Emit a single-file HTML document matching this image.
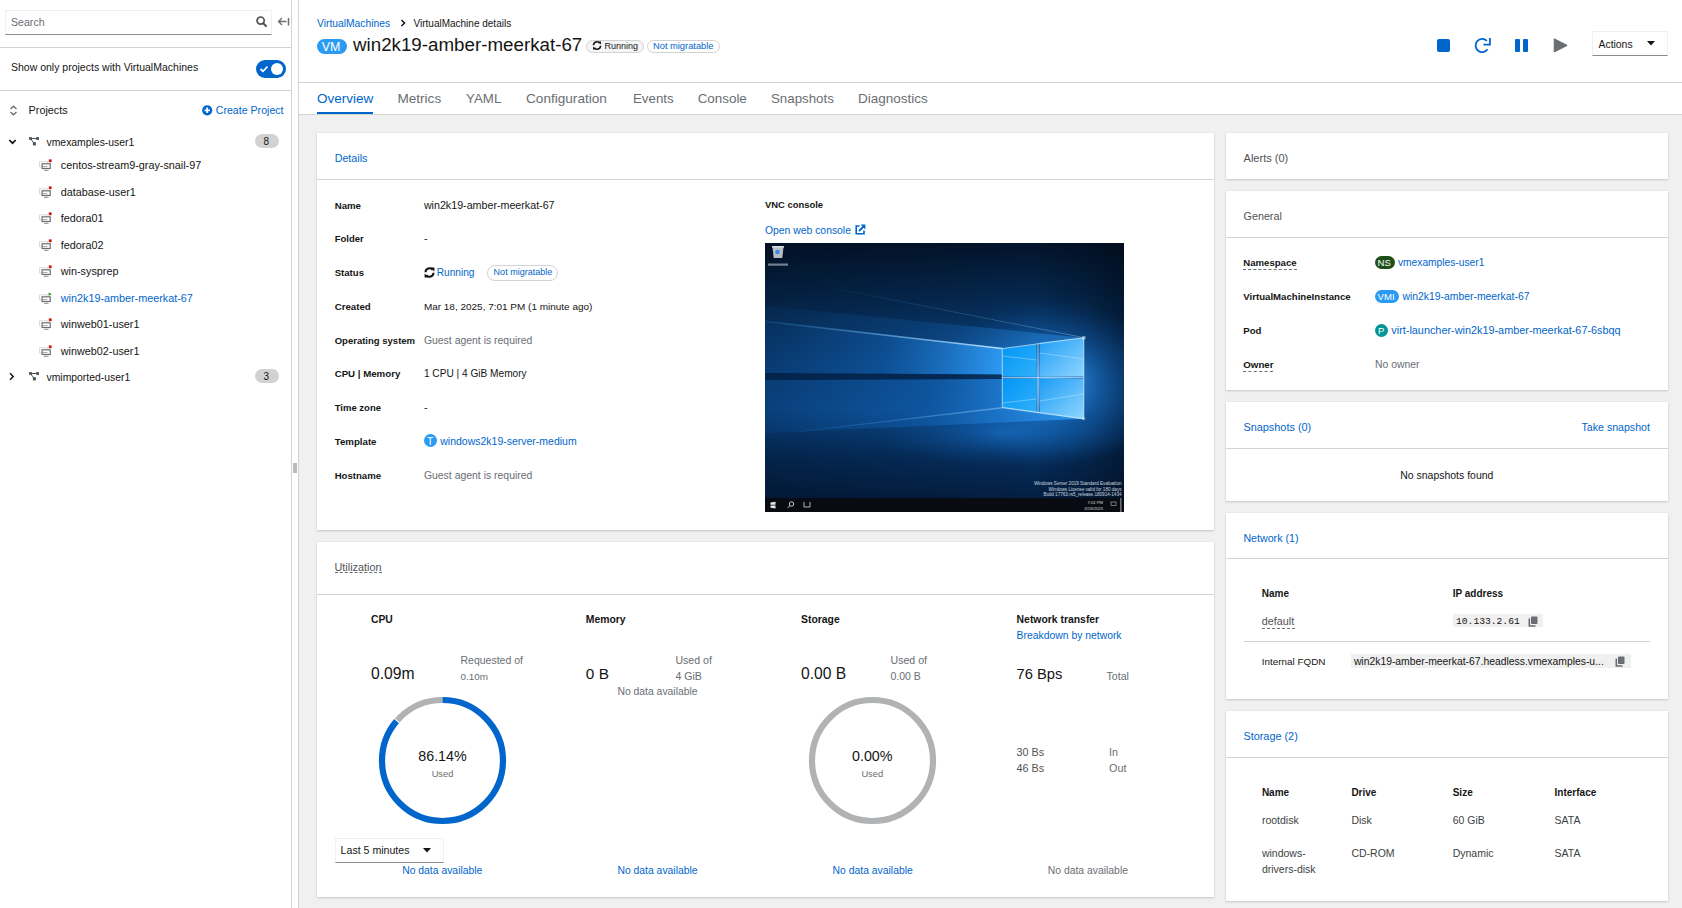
<!DOCTYPE html>
<html><head><meta charset="utf-8">
<style>
*{box-sizing:border-box;margin:0;padding:0}
html,body{width:1682px;height:908px;overflow:hidden}
body{background:#f0f0f0;font-family:"Liberation Sans",sans-serif;color:#151515;position:relative;font-size:11px}
.a{position:absolute}
.t{position:absolute;white-space:nowrap;line-height:1}
.lk{color:#0066cc}
.mu{color:#6a6e73}
.card{position:absolute;background:#fff;box-shadow:0 1px 2px rgba(3,3,3,.16),0 0 1px rgba(3,3,3,.1)}
.hl{position:absolute;height:1px;background:#d2d2d2}
</style></head>
<body>
<div class="a" style="left:0;top:0;width:292px;height:908px;background:#fff;border-right:1px solid #d2d2d2"></div>
<div class="a" style="left:292px;top:0;width:7px;height:908px;background:#fff;border-right:1px solid #d2d2d2"></div>
<div class="a" style="left:293px;top:463px;width:4px;height:10px;background:#b8bbbe"></div>
<div class="a" style="left:299px;top:0;width:1383px;height:83px;background:#fff;border-bottom:1px solid #d2d2d2"></div>
<div class="a" style="left:299px;top:83px;width:1383px;height:32px;background:#fff;border-bottom:1px solid #d2d2d2"></div>
<div class="card" style="left:317px;top:133px;width:897px;height:397px"></div>
<div class="card" style="left:317px;top:542px;width:897px;height:355px"></div>
<div class="card" style="left:1226px;top:133px;width:442px;height:46px"></div>
<div class="card" style="left:1226px;top:191px;width:442px;height:199px"></div>
<div class="card" style="left:1226px;top:402px;width:442px;height:99px"></div>
<div class="card" style="left:1226px;top:513px;width:442px;height:186px"></div>
<div class="card" style="left:1226px;top:711px;width:442px;height:190px"></div>
<div class="a" style="left:5px;top:10px;width:267px;height:25px;border:1px solid #f0f0f0;border-bottom:1px solid #8a8d90"></div>
<div class="t mu" style="left:11px;top:17.10px;font-size:10.6px;">Search</div>
<svg class="a" style="left:256px;top:16px" width="11" height="11" viewBox="0 0 11 11"><circle cx="4.6" cy="4.6" r="3.6" fill="none" stroke="#4f5255" stroke-width="1.7"/><path d="M7.2 7.2L10 10" stroke="#4f5255" stroke-width="2" stroke-linecap="round"/></svg>
<svg class="a" style="left:277px;top:17px" width="13" height="9" viewBox="0 0 13 9"><path d="M5 1L1.5 4.5L5 8M1.5 4.5H9.5" fill="none" stroke="#6a6e73" stroke-width="1.3"/><path d="M11.5 1V8.5" stroke="#6a6e73" stroke-width="1.5"/></svg>
<div class="hl" style="left:0;top:47px;width:292px"></div>
<div class="t" style="left:11px;top:61.90px;font-size:10.5px;">Show only projects with VirtualMachines</div>
<div class="a" style="left:256px;top:60px;width:30px;height:18px;border-radius:9px;background:#0066cc"></div>
<div class="a" style="left:271px;top:63px;width:12px;height:12px;border-radius:50%;background:#fff"></div>
<svg class="a" style="left:259px;top:65px" width="10" height="8" viewBox="0 0 10 8"><path d="M1.5 4L4 6.3L8.5 1.5" fill="none" stroke="#fff" stroke-width="1.7"/></svg>
<div class="hl" style="left:0;top:90px;width:292px"></div>
<svg class="a" style="left:9px;top:105px" width="9" height="11" viewBox="0 0 9 11"><path d="M1.5 4L4.5 1.2L7.5 4M1.5 7L4.5 9.8L7.5 7" fill="none" stroke="#6a6e73" stroke-width="1.4"/></svg>
<div class="t" style="left:28.6px;top:104.90px;font-size:10.8px;">Projects</div>
<svg class="a" style="left:202px;top:105px" width="11" height="11" viewBox="0 0 11 11"><circle cx="5.2" cy="5.3" r="5.1" fill="#0066cc"/><path d="M5.2 2.6V8M2.5 5.3H7.9" stroke="#fff" stroke-width="1.8"/></svg>
<div class="t lk" style="left:215.8px;top:104.90px;font-size:10.6px;">Create Project</div>
<svg class="a" style="left:8px;top:138px" width="9" height="8" viewBox="0 0 9 8"><path d="M1.3 2L4.5 5.2L7.7 2" fill="none" stroke="#151515" stroke-width="1.7"/></svg>
<svg class="a" style="left:28px;top:136px" width="12" height="11" viewBox="0 0 12 11"><path d="M2.4 2.5H9.5M2.4 2.5L6.4 7.8" stroke="#4f5255" stroke-width="1"/><rect x="1.1" y="1.1" width="2.8" height="2.8" fill="#4f5255"/><rect x="8.2" y="1.1" width="2.8" height="2.8" fill="#4f5255"/><rect x="4.9" y="6.2" width="3" height="3.2" fill="#4f5255"/></svg>
<div class="t" style="left:46.5px;top:138.00px;font-size:10.4px;">vmexamples-user1</div>
<div class="a" style="left:255px;top:134px;width:24px;height:14px;border-radius:7px;background:#d2d2d2"></div>
<div class="t" style="left:263.5px;top:137.00px;font-size:10px;color:#151515">8</div>
<svg class="a" style="left:39px;top:158.7px" width="14" height="13" viewBox="0 0 14 13"><rect x="0.6" y="2.8" width="8.2" height="5" fill="none" stroke="#d2d2d2" stroke-width="0.8"/><rect x="3.1" y="4.8" width="8.1" height="4.7" fill="#fff" stroke="#6a6e73" stroke-width="1.2"/><path d="M3.5 7.6H8.5" stroke="#6a6e73" stroke-width="0.6"/><path d="M5 11.3H9.5" stroke="#8a8d90" stroke-width="1"/><rect x="9.8" y="0.4" width="2.8" height="2.8" fill="#c9190b"/></svg>
<div class="t" style="left:60.8px;top:160.20px;font-size:10.8px;">centos-stream9-gray-snail-97</div>
<svg class="a" style="left:39px;top:185.7px" width="14" height="13" viewBox="0 0 14 13"><rect x="0.6" y="2.8" width="8.2" height="5" fill="none" stroke="#d2d2d2" stroke-width="0.8"/><rect x="3.1" y="4.8" width="8.1" height="4.7" fill="#fff" stroke="#6a6e73" stroke-width="1.2"/><path d="M3.5 7.6H8.5" stroke="#6a6e73" stroke-width="0.6"/><path d="M5 11.3H9.5" stroke="#8a8d90" stroke-width="1"/><rect x="9.8" y="0.4" width="2.8" height="2.8" fill="#c9190b"/></svg>
<div class="t" style="left:60.8px;top:187.20px;font-size:10.8px;">database-user1</div>
<svg class="a" style="left:39px;top:211.8px" width="14" height="13" viewBox="0 0 14 13"><rect x="0.6" y="2.8" width="8.2" height="5" fill="none" stroke="#d2d2d2" stroke-width="0.8"/><rect x="3.1" y="4.8" width="8.1" height="4.7" fill="#fff" stroke="#6a6e73" stroke-width="1.2"/><path d="M3.5 7.6H8.5" stroke="#6a6e73" stroke-width="0.6"/><path d="M5 11.3H9.5" stroke="#8a8d90" stroke-width="1"/><rect x="9.8" y="0.4" width="2.8" height="2.8" fill="#c9190b"/></svg>
<div class="t" style="left:60.8px;top:213.30px;font-size:10.8px;">fedora01</div>
<svg class="a" style="left:39px;top:238.5px" width="14" height="13" viewBox="0 0 14 13"><rect x="0.6" y="2.8" width="8.2" height="5" fill="none" stroke="#d2d2d2" stroke-width="0.8"/><rect x="3.1" y="4.8" width="8.1" height="4.7" fill="#fff" stroke="#6a6e73" stroke-width="1.2"/><path d="M3.5 7.6H8.5" stroke="#6a6e73" stroke-width="0.6"/><path d="M5 11.3H9.5" stroke="#8a8d90" stroke-width="1"/><rect x="9.8" y="0.4" width="2.8" height="2.8" fill="#c9190b"/></svg>
<div class="t" style="left:60.8px;top:240.00px;font-size:10.8px;">fedora02</div>
<svg class="a" style="left:39px;top:264.7px" width="14" height="13" viewBox="0 0 14 13"><rect x="0.6" y="2.8" width="8.2" height="5" fill="none" stroke="#d2d2d2" stroke-width="0.8"/><rect x="3.1" y="4.8" width="8.1" height="4.7" fill="#fff" stroke="#6a6e73" stroke-width="1.2"/><path d="M3.5 7.6H8.5" stroke="#6a6e73" stroke-width="0.6"/><path d="M5 11.3H9.5" stroke="#8a8d90" stroke-width="1"/><rect x="9.8" y="0.4" width="2.8" height="2.8" fill="#c9190b"/></svg>
<div class="t" style="left:60.8px;top:266.20px;font-size:10.8px;">win-sysprep</div>
<svg class="a" style="left:39px;top:291.6px" width="14" height="13" viewBox="0 0 14 13"><rect x="0.6" y="2.8" width="8.2" height="5" fill="none" stroke="#d2d2d2" stroke-width="0.8"/><rect x="3.1" y="4.8" width="8.1" height="4.7" fill="#fff" stroke="#6a6e73" stroke-width="1.2"/><path d="M3.5 7.6H8.5" stroke="#6a6e73" stroke-width="0.6"/><path d="M5 11.3H9.5" stroke="#8a8d90" stroke-width="1"/><path d="M9.6 0.6L12.8 2.2L9.6 3.8Z" fill="#3e8635"/></svg>
<div class="t lk" style="left:60.8px;top:293.10px;font-size:10.8px;">win2k19-amber-meerkat-67</div>
<svg class="a" style="left:39px;top:317.8px" width="14" height="13" viewBox="0 0 14 13"><rect x="0.6" y="2.8" width="8.2" height="5" fill="none" stroke="#d2d2d2" stroke-width="0.8"/><rect x="3.1" y="4.8" width="8.1" height="4.7" fill="#fff" stroke="#6a6e73" stroke-width="1.2"/><path d="M3.5 7.6H8.5" stroke="#6a6e73" stroke-width="0.6"/><path d="M5 11.3H9.5" stroke="#8a8d90" stroke-width="1"/><rect x="9.8" y="0.4" width="2.8" height="2.8" fill="#c9190b"/></svg>
<div class="t" style="left:60.8px;top:319.30px;font-size:10.8px;">winweb01-user1</div>
<svg class="a" style="left:39px;top:344.5px" width="14" height="13" viewBox="0 0 14 13"><rect x="0.6" y="2.8" width="8.2" height="5" fill="none" stroke="#d2d2d2" stroke-width="0.8"/><rect x="3.1" y="4.8" width="8.1" height="4.7" fill="#fff" stroke="#6a6e73" stroke-width="1.2"/><path d="M3.5 7.6H8.5" stroke="#6a6e73" stroke-width="0.6"/><path d="M5 11.3H9.5" stroke="#8a8d90" stroke-width="1"/><rect x="9.8" y="0.4" width="2.8" height="2.8" fill="#c9190b"/></svg>
<div class="t" style="left:60.8px;top:346.00px;font-size:10.8px;">winweb02-user1</div>
<svg class="a" style="left:8px;top:372px" width="8" height="9" viewBox="0 0 8 9"><path d="M2 1.3L5.2 4.5L2 7.7" fill="none" stroke="#151515" stroke-width="1.5"/></svg>
<svg class="a" style="left:28px;top:371px" width="12" height="11" viewBox="0 0 12 11"><path d="M2.4 2.5H9.5M2.4 2.5L6.4 7.8" stroke="#4f5255" stroke-width="1"/><rect x="1.1" y="1.1" width="2.8" height="2.8" fill="#4f5255"/><rect x="8.2" y="1.1" width="2.8" height="2.8" fill="#4f5255"/><rect x="4.9" y="6.2" width="3" height="3.2" fill="#4f5255"/></svg>
<div class="t" style="left:46.5px;top:372.90px;font-size:10.4px;">vmimported-user1</div>
<div class="a" style="left:255px;top:369px;width:24px;height:14px;border-radius:7px;background:#d2d2d2"></div>
<div class="t" style="left:263.5px;top:372.00px;font-size:10px;">3</div>
<div class="t lk" style="left:317px;top:18.50px;font-size:10.3px;">VirtualMachines</div>
<svg class="a" style="left:400px;top:18.9px" width="7" height="8" viewBox="0 0 7 8"><path d="M1.5 1L4.5 4L1.5 7" fill="none" stroke="#151515" stroke-width="1.5"/></svg>
<div class="t" style="left:413.5px;top:18.50px;font-size:10px;">VirtualMachine details</div>
<div class="a" style="left:317px;top:39px;width:30px;height:15px;border-radius:8px;background:#2b9af3"></div>
<div class="t" style="left:321.8px;top:40.60px;font-size:12.4px;color:#fff">VM</div>
<div class="t" style="left:353px;top:35.80px;font-size:18.75px;">win2k19-amber-meerkat-67</div>
<div class="a" style="left:586px;top:40px;width:58px;height:13px;border-radius:7px;background:#f5f5f5;border:1px solid #d2d2d2"></div>
<svg class="a" style="left:591.5px;top:41.2px" width="10" height="9" viewBox="0 0 10 9"><path d="M1.5 4.2A3.3 3.3 0 0 1 7.6 2.4M8.5 4.8A3.3 3.3 0 0 1 2.4 6.6" fill="none" stroke="#151515" stroke-width="1.5"/><path d="M6 0.5L9 0.5L9 3.5Z M4 8.5L1 8.5L1 5.5Z" fill="#151515"/></svg>
<div class="t" style="left:604.5px;top:41.60px;font-size:9px;">Running</div>
<div class="a" style="left:647px;top:40px;width:73px;height:13px;border-radius:7px;background:#fff;border:1px solid #d2d2d2"></div>
<div class="t lk" style="left:653px;top:41.60px;font-size:9.3px;">Not migratable</div>
<div class="a" style="left:1437px;top:38.6px;width:13.2px;height:13.4px;border-radius:2px;background:#0066cc"></div>
<svg class="a" style="left:1474px;top:37px" width="17" height="17" viewBox="0 0 17 17"><path d="M12.9 3.9A6.6 6.6 0 1 0 13.6 12.3" fill="none" stroke="#0066cc" stroke-width="1.8"/><path d="M9.4 7.6H15.9V0.9" fill="none" stroke="#0066cc" stroke-width="1.8"/></svg>
<div class="a" style="left:1515px;top:38.6px;width:4.5px;height:13.4px;border-radius:1px;background:#0066cc"></div>
<div class="a" style="left:1523.3px;top:38.6px;width:4.5px;height:13.4px;border-radius:1px;background:#0066cc"></div>
<svg class="a" style="left:1553px;top:37px" width="16" height="17" viewBox="0 0 16 17"><path d="M1.2 1.8L14.2 8.4L1.2 15Z" fill="#6a6e73" stroke="#6a6e73" stroke-width="1" stroke-linejoin="round"/></svg>
<div class="a" style="left:1592px;top:31px;width:76px;height:25px;border:1px solid #f0f0f0;border-bottom:1px solid #8a8d90"></div>
<svg class="a" style="left:1647px;top:41px" width="8" height="5" viewBox="0 0 8 5"><path d="M0 0H8L4 4.5Z" fill="#151515"/></svg>
<div class="a" style="left:317px;top:112px;width:56px;height:2px;background:#0066cc"></div>
<div class="t" style="left:1598.5px;top:39.50px;font-size:10.4px;">Actions</div>
<div class="t lk" style="left:317px;top:91.90px;font-size:13.5px;">Overview</div>
<div class="t mu" style="left:397.4px;top:91.90px;font-size:13.6px;">Metrics</div>
<div class="t mu" style="left:466.1px;top:91.90px;font-size:13.3px;">YAML</div>
<div class="t mu" style="left:526px;top:91.90px;font-size:13.6px;">Configuration</div>
<div class="t mu" style="left:633px;top:91.90px;font-size:13.3px;">Events</div>
<div class="t mu" style="left:697.7px;top:91.90px;font-size:13.4px;">Console</div>
<div class="t mu" style="left:771px;top:91.90px;font-size:13.3px;">Snapshots</div>
<div class="t mu" style="left:858px;top:91.90px;font-size:13.5px;">Diagnostics</div>
<div class="t lk" style="left:334.7px;top:153.00px;font-size:10.7px;">Details</div>
<div class="hl" style="left:317px;top:179px;width:897px"></div>
<div class="t" style="left:334.7px;top:201.00px;font-size:9.66px;font-weight:bold;">Name</div>
<div class="t" style="left:334.7px;top:234.10px;font-size:9.5px;font-weight:bold;">Folder</div>
<div class="t" style="left:334.7px;top:267.70px;font-size:9.6px;font-weight:bold;">Status</div>
<div class="t" style="left:334.7px;top:302.20px;font-size:9.7px;font-weight:bold;">Created</div>
<div class="t" style="left:334.7px;top:335.90px;font-size:9.52px;font-weight:bold;">Operating system</div>
<div class="t" style="left:334.7px;top:369.00px;font-size:9.69px;font-weight:bold;">CPU | Memory</div>
<div class="t" style="left:334.7px;top:402.90px;font-size:9.5px;font-weight:bold;">Time zone</div>
<div class="t" style="left:334.7px;top:436.80px;font-size:9.7px;font-weight:bold;">Template</div>
<div class="t" style="left:334.7px;top:470.70px;font-size:9.58px;font-weight:bold;">Hostname</div>
<div class="t" style="left:423.9px;top:200.00px;font-size:10.69px;">win2k19-amber-meerkat-67</div>
<div class="t" style="left:423.9px;top:233.10px;font-size:10.5px;">-</div>
<div class="t" style="left:423.9px;top:302.20px;font-size:9.98px;">Mar 18, 2025, 7:01 PM (1 minute ago)</div>
<div class="t mu" style="left:423.9px;top:335.90px;font-size:10.44px;">Guest agent is required</div>
<div class="t" style="left:423.9px;top:369.00px;font-size:10.15px;">1 CPU | 4 GiB Memory</div>
<div class="t" style="left:423.9px;top:401.90px;font-size:10.5px;">-</div>
<div class="t mu" style="left:423.9px;top:470.70px;font-size:10.44px;">Guest agent is required</div>
<svg class="a" style="left:423.5px;top:266.5px" width="11" height="11" viewBox="0 0 11 11"><path d="M1.5 5.3A4 4 0 0 1 8.7 2.9M9.5 5.7A4 4 0 0 1 2.3 8.1" fill="none" stroke="#151515" stroke-width="2"/><path d="M6.2 0.4L10.4 0.4L10.4 4.6Z M4.8 10.6L0.6 10.6L0.6 6.4Z" fill="#151515"/></svg>
<div class="t lk" style="left:436.7px;top:267.70px;font-size:10.15px;">Running</div>
<div class="a" style="left:487.3px;top:265.2px;width:71.2px;height:15.5px;border-radius:8px;border:1px solid #d2d2d2"></div>
<div class="t lk" style="left:493.6px;top:268.20px;font-size:9.04px;">Not migratable</div>
<div class="a" style="left:424px;top:434.3px;width:13px;height:13px;border-radius:50%;background:#2b9af3"></div>
<div class="t" style="left:427px;top:437.00px;font-size:10.4px;color:#fff">T</div>
<div class="t lk" style="left:440.3px;top:436.80px;font-size:10.49px;">windows2k19-server-medium</div>
<div class="t" style="left:765px;top:199.80px;font-size:9.44px;font-weight:bold;">VNC console</div>
<div class="t lk" style="left:765px;top:225.50px;font-size:10.38px;">Open web console</div>
<svg class="a" style="left:854.5px;top:223.5px" width="11" height="11" viewBox="0 0 11 11"><path d="M4.5 2H1.2V9.8H9V6.5" fill="none" stroke="#0066cc" stroke-width="1.6"/><path d="M5.5 0.6H10.4V5.5Z" fill="#0066cc"/><path d="M4 7L9 2" stroke="#0066cc" stroke-width="1.8"/></svg>
<svg class="a" style="left:765px;top:243px" width="359" height="269" viewBox="0 0 359 269">
<defs>
<linearGradient id="vb" x1="0" y1="0" x2="0" y2="1">
<stop offset="0" stop-color="#03132a"/>
<stop offset="0.2" stop-color="#05284f"/>
<stop offset="0.45" stop-color="#0a4584"/>
<stop offset="0.62" stop-color="#0b4f96"/>
<stop offset="0.8" stop-color="#052d5c"/>
<stop offset="1" stop-color="#031a38"/>
</linearGradient>
<linearGradient id="hl" x1="0" y1="0" x2="1" y2="0">
<stop offset="0" stop-color="#000610" stop-opacity="0.25"/>
<stop offset="0.5" stop-color="#000610" stop-opacity="0.08"/>
<stop offset="0.75" stop-color="#000610" stop-opacity="0"/>
<stop offset="0.9" stop-color="#000610" stop-opacity="0.25"/>
<stop offset="1" stop-color="#000610" stop-opacity="0.5"/>
</linearGradient>
<linearGradient id="bm" x1="0" y1="0" x2="1" y2="0">
<stop offset="0" stop-color="#0d4f96" stop-opacity="0.2"/>
<stop offset="0.5" stop-color="#1262b5" stop-opacity="0.5"/>
<stop offset="1" stop-color="#2e9cf5" stop-opacity="0.95"/>
</linearGradient>
<linearGradient id="ln" x1="0" y1="0" x2="1" y2="0">
<stop offset="0" stop-color="#3a9cf0" stop-opacity="0.15"/>
<stop offset="1" stop-color="#bfe6ff" stop-opacity="0.95"/>
</linearGradient>
<linearGradient id="pl" x1="0" y1="0" x2="1" y2="1">
<stop offset="0" stop-color="#0296f5"/>
<stop offset="1" stop-color="#30b0fb"/>
</linearGradient>
<linearGradient id="pr" x1="0" y1="0" x2="1" y2="1">
<stop offset="0" stop-color="#1d9cf5"/>
<stop offset="1" stop-color="#8fd6ff"/>
</linearGradient>
<radialGradient id="gl" cx="0.5" cy="0.5" r="0.5">
<stop offset="0" stop-color="#5ab8ff" stop-opacity="0.85"/>
<stop offset="0.45" stop-color="#1f7fdc" stop-opacity="0.45"/>
<stop offset="1" stop-color="#0a4a8e" stop-opacity="0"/>
</radialGradient>
<radialGradient id="fl" cx="0.5" cy="0.5" r="0.5">
<stop offset="0" stop-color="#1d78d2" stop-opacity="0.55"/>
<stop offset="1" stop-color="#0a4a8e" stop-opacity="0"/>
</radialGradient>
</defs>
<rect width="359" height="269" fill="url(#vb)"/>
<rect width="359" height="255" fill="url(#hl)"/>
<ellipse cx="285" cy="140" rx="115" ry="85" fill="url(#gl)"/>
<ellipse cx="240" cy="190" rx="130" ry="35" fill="url(#fl)"/>
<polygon points="0,62.7 318.8,94.7 237.3,105.6 0,78.4" fill="url(#bm)" opacity="0.5"/>
<polygon points="0,78.4 237.3,105.6 237.3,131.5 0,130" fill="url(#bm)"/>
<polygon points="0,137 237.3,136 237.3,164.4 318.8,175.7 0,190" fill="url(#bm)"/>
<polygon points="0,77.6 237.3,104.8 237.3,106.2 0,79.2" fill="url(#ln)"/>
<polygon points="71,45.2 318.8,94.2 318.8,95 71,46" fill="url(#ln)" opacity="0.45"/>
<polygon points="35,188 237.3,164 318.8,175.5 318.8,176.5 237.3,165.5 35,189" fill="url(#ln)" opacity="0.7"/>
<polygon points="0,130 237.3,131.5 237.3,136 0,137" fill="#021835" fill-opacity="0.6"/>
<polygon points="237.3,105.6 271.5,101.5 271.5,133.6 237.3,133.6" fill="url(#pl)"/>
<polygon points="274.7,99.5 318.8,94.7 318.8,133.6 274.7,133.6" fill="url(#pr)"/>
<polygon points="237.3,135.8 271.5,135.8 271.5,169 237.3,164.4" fill="url(#pl)"/>
<polygon points="274.7,135.8 318.8,135.8 318.8,175.7 274.7,169.5" fill="url(#pr)"/>
<path d="M237.3 105.6L318.8 94.7V175.7L237.3 164.4Z M273 100.5V170 M237.3 134.7H318.8" fill="none" stroke="#d8f2ff" stroke-width="0.8" stroke-opacity="0.9"/>
<path d="M274.7 110L318.8 116 M237.3 113L271.5 117 M274.7 158L318.8 151 M237.3 160L271.5 156" stroke="#c8ecff" stroke-width="0.7" stroke-opacity="0.6"/>
<circle cx="318.8" cy="94.7" r="2" fill="#e8f6ff" opacity="0.5"/>
<circle cx="318.8" cy="175.7" r="1.6" fill="#e8f6ff" opacity="0.4"/>
<rect x="0" y="255" width="359" height="14" fill="#080c12"/>
<rect x="356" y="0" width="3" height="269" fill="#fff" opacity="0"/>
<path d="M5.5 259.5L10.5 258.8V261.8H5.5Z M5.5 262.5H10.5V265.5L5.5 264.8Z" fill="#e8e8e8"/>
<circle cx="26.5" cy="261" r="2.2" fill="none" stroke="#ddd" stroke-width="0.9"/>
<path d="M25 262.6L22.8 264.8" stroke="#ddd" stroke-width="1"/>
<path d="M39 259V264H45V259" fill="none" stroke="#ddd" stroke-width="0.8"/>
<path d="M7.5 4H18.5L17.3 15H8.7Z" fill="#b8bdc2"/><rect x="7" y="3" width="12" height="1.6" fill="#d8dcdf"/>
<circle cx="12.5" cy="9" r="2.3" fill="#2f8ee6"/>
<rect x="3" y="20.5" width="20" height="2.2" fill="#cfd8e2" opacity="0.55"/>
<g fill="#e6eef6" font-family="Liberation Sans" font-size="4.6" text-anchor="end" opacity="0.85">
<text x="356.5" y="242">Windows Server 2019 Standard Evaluation</text>
<text x="356.5" y="247.5">Windows License valid for 180 days</text>
<text x="356.5" y="253">Build 17763.rs5_release.180914-1434</text>
<text x="338" y="261" font-size="4.2">7:01 PM</text>
<text x="338" y="267" font-size="4.2">3/18/2025</text>
<rect x="346" y="259" width="5" height="3.5" fill="none" stroke="#ddd" stroke-width="0.6"/>
<rect x="355.5" y="255" width="0.8" height="14"/>
</g>
</svg>
<div class="t" style="left:334.5px;top:561.60px;font-size:10.84px;color:#4f5255">Utilization</div>
<div class="a" style="left:334.5px;top:572px;width:47px;height:0;border-top:1px dashed #6a6e73"></div>
<div class="hl" style="left:317px;top:594px;width:897px"></div>
<div class="t" style="left:371px;top:615.00px;font-size:10.32px;font-weight:bold;">CPU</div>
<div class="t" style="left:585.8px;top:615.00px;font-size:10.4px;font-weight:bold;">Memory</div>
<div class="t" style="left:801px;top:615.00px;font-size:10.4px;font-weight:bold;">Storage</div>
<div class="t" style="left:1016.6px;top:615.00px;font-size:10.4px;font-weight:bold;">Network transfer</div>
<div class="t lk" style="left:1016.6px;top:631.30px;font-size:10.38px;">Breakdown by network</div>
<div class="t" style="left:371px;top:665.80px;font-size:15.7px;">0.09m</div>
<div class="t" style="left:585.8px;top:665.80px;font-size:15.4px;">0 B</div>
<div class="t" style="left:801px;top:665.80px;font-size:15.67px;">0.00 B</div>
<div class="t" style="left:1016.6px;top:666.80px;font-size:14.71px;">76 Bps</div>
<div class="t mu" style="left:460.5px;top:655.30px;font-size:10.51px;">Requested of</div>
<div class="t mu" style="left:460.5px;top:672.10px;font-size:9.9px;">0.10m</div>
<div class="t mu" style="left:675.4px;top:655.30px;font-size:10.6px;">Used of</div>
<div class="t mu" style="left:675.4px;top:671.10px;font-size:10.6px;">4 GiB</div>
<div class="t mu" style="left:890.5px;top:655.30px;font-size:10.6px;">Used of</div>
<div class="t mu" style="left:890.5px;top:671.10px;font-size:10.5px;">0.00 B</div>
<div class="t mu" style="left:1106.6px;top:671.10px;font-size:10.56px;">Total</div>
<div class="t mu" style="left:617.4px;top:687.20px;font-size:10.39px;">No data available</div>
<svg class="a" style="left:372px;top:690px" width="141" height="141" viewBox="372.0 690.0 141 141"><circle cx="442.5" cy="760.5" r="60.5" fill="none" stroke="#b0b2b4" stroke-width="6.2"/><circle cx="442.5" cy="760.5" r="60.5" fill="none" stroke="#fff" stroke-width="7.2" stroke-dasharray="329.45 380.13" stroke-dashoffset="1" transform="rotate(-90 442.5 760.5)"/><circle cx="442.5" cy="760.5" r="60.5" fill="none" stroke="#0066cc" stroke-width="6.2" stroke-dasharray="327.45 380.13" transform="rotate(-90 442.5 760.5)"/></svg>
<svg class="a" style="left:801.75px;top:690px" width="141" height="141" viewBox="0 0 141 141"><circle cx="70.5" cy="70.5" r="60.5" fill="none" stroke="#b0b2b4" stroke-width="6.2"/></svg>
<div class="t" style="left:382.5px;width:120px;text-align:center;top:748.90px;font-size:14.3px">86.14%</div>
<div class="t mu" style="left:382.5px;width:120px;text-align:center;top:770.00px;font-size:9.3px">Used</div>
<div class="t" style="left:812.25px;width:120px;text-align:center;top:748.90px;font-size:14.3px">0.00%</div>
<div class="t mu" style="left:812.25px;width:120px;text-align:center;top:770.00px;font-size:9.3px">Used</div>
<div class="t" style="left:1016.6px;top:747.00px;font-size:10.8px;color:#4f5255">30 Bs</div>
<div class="t" style="left:1016.6px;top:762.80px;font-size:10.8px;color:#4f5255">46 Bs</div>
<div class="t mu" style="left:1109px;top:747.00px;font-size:10.8px;">In</div>
<div class="t mu" style="left:1109px;top:762.80px;font-size:10.8px;">Out</div>
<div class="a" style="left:335px;top:838px;width:109px;height:25px;border:1px solid #f0f0f0;border-bottom:1px solid #8a8d90"></div>
<div class="t" style="left:340.6px;top:845.10px;font-size:10.6px;">Last 5 minutes</div>
<svg class="a" style="left:422.5px;top:847.5px" width="8" height="5" viewBox="0 0 8 5"><path d="M0 0H8L4 4.5Z" fill="#151515"/></svg>
<div class="t lk" style="left:402.2px;top:866.10px;font-size:10.39px;">No data available</div>
<div class="t lk" style="left:617.4px;top:866.10px;font-size:10.39px;">No data available</div>
<div class="t lk" style="left:832.6px;top:866.10px;font-size:10.39px;">No data available</div>
<div class="t mu" style="left:1047.8px;top:866.10px;font-size:10.39px;">No data available</div>
<div class="t" style="left:1243.6px;top:153.40px;font-size:11.0px;color:#4f5255">Alerts (0)</div>
<div class="t" style="left:1243.6px;top:210.90px;font-size:10.74px;color:#4f5255">General</div>
<div class="hl" style="left:1226px;top:237px;width:442px"></div>
<div class="t" style="left:1243.3px;top:258.10px;font-size:9.59px;font-weight:bold;">Namespace</div>
<div class="a" style="left:1243.3px;top:269.1px;width:53.3px;height:0;border-top:1px dashed #6a6e73"></div>
<div class="t" style="left:1243.3px;top:292.10px;font-size:9.65px;font-weight:bold;">VirtualMachineInstance</div>
<div class="t" style="left:1243.3px;top:326.10px;font-size:9.64px;font-weight:bold;">Pod</div>
<div class="t" style="left:1243.3px;top:360.10px;font-size:9.71px;font-weight:bold;">Owner</div>
<div class="a" style="left:1243.3px;top:371.1px;width:30.2px;height:0;border-top:1px dashed #6a6e73"></div>
<div class="a" style="left:1375px;top:256px;width:20px;height:13px;border-radius:7px;background:#1e4f18"></div>
<div class="t" style="left:1377.6px;top:257.60px;font-size:9.6px;color:#fff">NS</div>
<div class="t lk" style="left:1398px;top:258.10px;font-size:10.23px;">vmexamples-user1</div>
<div class="a" style="left:1375px;top:290px;width:24px;height:13px;border-radius:7px;background:#2b9af3"></div>
<div class="t" style="left:1377.6px;top:291.60px;font-size:9.6px;color:#fff">VMI</div>
<div class="t lk" style="left:1402.4px;top:292.10px;font-size:10.4px;">win2k19-amber-meerkat-67</div>
<div class="a" style="left:1375px;top:324px;width:13px;height:13px;border-radius:50%;background:#009596"></div>
<div class="t" style="left:1378.1px;top:325.60px;font-size:9.6px;color:#fff">P</div>
<div class="t lk" style="left:1391.3px;top:325.10px;font-size:10.86px;">virt-launcher-win2k19-amber-meerkat-67-6sbqq</div>
<div class="t mu" style="left:1375px;top:360.10px;font-size:10.42px;">No owner</div>
<div class="t lk" style="left:1243.4px;top:421.60px;font-size:10.9px;">Snapshots (0)</div>
<div class="t lk" style="left:1450px;width:199.9px;text-align:right;top:421.60px;font-size:10.6px">Take snapshot</div>
<div class="hl" style="left:1226px;top:448px;width:442px"></div>
<div class="t" style="left:1346.8px;width:200px;text-align:center;top:471.00px;font-size:10.48px">No snapshots found</div>
<div class="t lk" style="left:1243.4px;top:532.60px;font-size:10.66px;">Network (1)</div>
<div class="hl" style="left:1226px;top:558px;width:442px"></div>
<div class="t" style="left:1261.8px;top:589.00px;font-size:10.0px;font-weight:bold;">Name</div>
<div class="t" style="left:1452.7px;top:589.00px;font-size:10.0px;font-weight:bold;">IP address</div>
<div class="t" style="left:1261.8px;top:616.00px;font-size:10.8px;color:#4f5255">default</div>
<div class="a" style="left:1261.8px;top:628px;width:33.7px;height:0;border-top:1px dashed #6a6e73"></div>
<div class="a" style="left:1452.7px;top:614px;width:90px;height:13.2px;background:#f0f0f0"></div>
<div class="t" style="left:1456px;top:616.50px;font-size:9.66px;font-family:'Liberation Mono',monospace;color:#151515">10.133.2.61</div>
<svg class="a" style="left:1527.5px;top:615.5px" width="10" height="11" viewBox="0 0 10 11"><rect x="3" y="0.5" width="6.5" height="7.5" rx="0.8" fill="#6a6e73"/><path d="M1.3 2.5V10H7.5" fill="none" stroke="#6a6e73" stroke-width="1.6"/></svg>
<div class="hl" style="left:1244px;top:641px;width:406px"></div>
<div class="t" style="left:1261.8px;top:657.00px;font-size:9.9px;">Internal FQDN</div>
<div class="a" style="left:1351px;top:654px;width:280px;height:13.7px;background:#f0f0f0"></div>
<div class="t" style="left:1353.9px;top:657.00px;font-size:10.37px;">win2k19-amber-meerkat-67.headless.vmexamples-u...</div>
<svg class="a" style="left:1614.5px;top:655.5px" width="10" height="11" viewBox="0 0 10 11"><rect x="3" y="0.5" width="6.5" height="7.5" rx="0.8" fill="#6a6e73"/><path d="M1.3 2.5V10H7.5" fill="none" stroke="#6a6e73" stroke-width="1.6"/></svg>
<div class="t lk" style="left:1243.4px;top:730.90px;font-size:10.88px;">Storage (2)</div>
<div class="hl" style="left:1226px;top:757px;width:442px"></div>
<div class="t" style="left:1261.9px;top:788.30px;font-size:10.0px;font-weight:bold;">Name</div>
<div class="t" style="left:1351.4px;top:788.30px;font-size:10.0px;font-weight:bold;">Drive</div>
<div class="t" style="left:1452.7px;top:788.30px;font-size:10.0px;font-weight:bold;">Size</div>
<div class="t" style="left:1554.6px;top:788.30px;font-size:10.0px;font-weight:bold;">Interface</div>
<div class="t" style="left:1261.9px;top:815.10px;font-size:10.5px;color:#3c3f42">rootdisk</div>
<div class="t" style="left:1351.4px;top:815.10px;font-size:10.5px;color:#3c3f42">Disk</div>
<div class="t" style="left:1452.7px;top:815.10px;font-size:10.5px;color:#3c3f42">60 GiB</div>
<div class="t" style="left:1554.6px;top:815.10px;font-size:10.5px;color:#3c3f42">SATA</div>
<div class="t" style="left:1261.9px;top:848.20px;font-size:10.5px;color:#3c3f42">windows-</div>
<div class="t" style="left:1351.4px;top:848.20px;font-size:10.5px;color:#3c3f42">CD-ROM</div>
<div class="t" style="left:1452.7px;top:848.20px;font-size:10.5px;color:#3c3f42">Dynamic</div>
<div class="t" style="left:1554.6px;top:848.20px;font-size:10.5px;color:#3c3f42">SATA</div>
<div class="t" style="left:1261.9px;top:864.20px;font-size:10.5px;color:#3c3f42">drivers-disk</div>
</body></html>
